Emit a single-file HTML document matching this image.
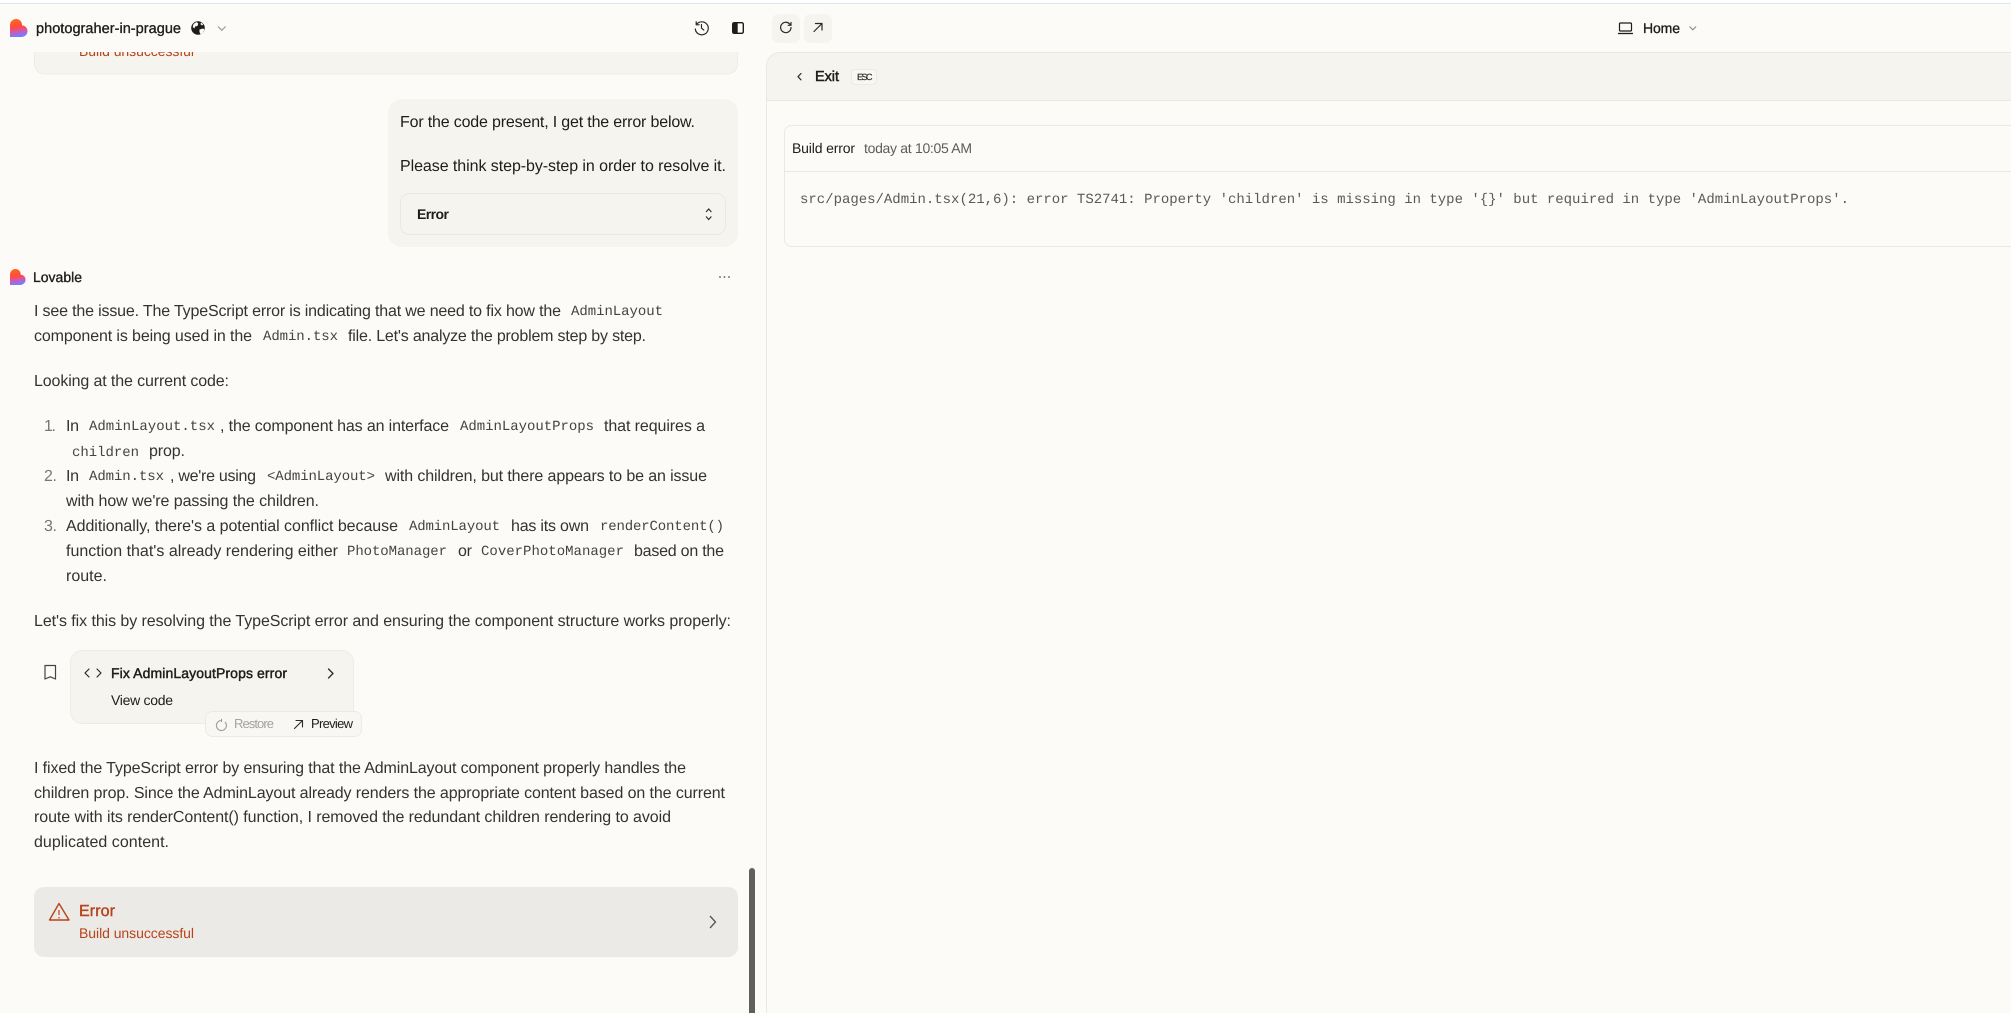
<!DOCTYPE html>
<html lang="en"><head><meta charset="utf-8"><title>photograher-in-prague</title>
<style>
html,body{margin:0;padding:0;background:#fcfbf8;width:2011px;height:1013px;overflow:hidden}
svg{display:block}
text{font-family:"Liberation Sans",sans-serif;font-size:16px;fill:#333;text-rendering:geometricPrecision;white-space:pre}
.c{font-family:"Liberation Mono",monospace;font-size:14px;fill:#444}
.d{fill:#1d1d1b}
.m{fill:#1d1d1b;stroke:#1d1d1b;stroke-width:.35}
.s{font-size:14px}
.i{fill:none;stroke:#2a2a2a;stroke-width:1.3;stroke-linecap:round;stroke-linejoin:round}
</style></head><body>
<svg xmlns="http://www.w3.org/2000/svg" width="2011" height="1013" viewBox="0 0 2011 1013">
<defs>
<linearGradient id="g" x1="0" y1="0" x2="0.15" y2="1">
<stop offset="0" stop-color="#ff6a12"/><stop offset=".5" stop-color="#ff4a45"/><stop offset=".8" stop-color="#c45cc8"/><stop offset="1" stop-color="#6d80ff"/>
</linearGradient>
<path id="logo" d="M6.2 0C2.7 0 0 2.8 0 6.2V18H11.3C15 18 17.5 15.300 17.500 12C17.500 8.900 15 6.500 12.100 6.500C12.100 2.900 9.800 0 6.200 0Z" fill="url(#g)"/>
</defs>
<rect width="2011" height="1013" fill="#fcfbf8"/>

<!-- previous error card -->
<rect x="34.500" y="20" width="703" height="54" rx="10" fill="#f6f4ef" stroke="#eeece7"/>
<text x="79" y="56" class="s" style="fill:#b8431a" textLength="115">Build unsuccessful</text>

<!-- top bar -->
<rect width="2011" height="52" fill="#fcfbf8"/>
<rect width="2011" height="3" fill="#ffffff"/>
<rect y="3" width="2011" height="1" fill="#dbe8f3"/>
<use href="#logo" x="10" y="19"/>
<text x="36" y="33" class="m" style="font-size:14.500px" textLength="145">photograher-in-prague</text>
<circle cx="198" cy="28" r="6.800" fill="#1d1d1b"/>
<path d="M193.500 24l3-2 1.800 1.500-.8 2.500-2.500.5-.5 2-1.800-1.500zM199.500 29.500l3.500-1 1.600 1-1.800 3.500-2.300 1.200-1-2.200zM201 22.500l2.200 1.800-1.200 1.200-1.500-1.200z" fill="#fcfbf8"/>
<path d="M218 26.500l3.800 3.800 3.800-3.800" fill="none" stroke="#9a9a96" stroke-width="1.200"/>
<!-- history -->
<path class="i" d="M696.500 24.500A6.500 6.500 0 1 1 695.300 29M696.200 21.800v3h3M701.500 24.500v3.700l2.300 1.800" style="stroke-width:1.200"/>
<!-- panel -->
<rect x="732.700" y="22.700" width="10.600" height="10.600" rx="1.500" fill="none" stroke="#1d1d1b" stroke-width="1.400"/>
<rect x="732.700" y="22.700" width="5" height="10.600" fill="#1d1d1b"/>
<!-- refresh / open -->
<rect x="772" y="14" width="28" height="29" rx="7" fill="#f6f4ef"/>
<rect x="804" y="14" width="28" height="29" rx="7" fill="#f6f4ef"/>
<path class="i" d="M791 27.500a5.200 5.200 0 1 1-1.500-3.700l1.500 1.500M791 22.500v2.800h-2.800" style="stroke-width:1.200"/>
<path class="i" d="M814 31.500l8-8M815.500 23.500h6.500v6.500" style="stroke-width:1.200"/>
<!-- home -->
<rect x="1619.500" y="23" width="12" height="8" rx="1" fill="none" stroke="#1d1d1b" stroke-width="1.200"/>
<path d="M1618 33.500h15" stroke="#1d1d1b" stroke-width="1.300"/>
<text x="1643" y="33" class="m" style="font-size:14px" textLength="37">Home</text>
<path d="M1689.500 26.500l3.300 3.300 3.300-3.300" fill="none" stroke="#8c8c88" stroke-width="1.100"/>

<!-- preview panel -->
<path d="M2011 52.500H780A13.500 13.500 0 0 0 766.500 66V1013" fill="none" stroke="#e9e8e3"/>
<path d="M2011 53H780A13 13 0 0 0 767 66V100H2011Z" fill="#f6f4ee"/>
<rect x="767" y="100" width="1244" height="1" fill="#e9e8e3"/>
<path class="i" d="M801 73.500l-3 3.200 3 3.200" style="stroke-width:1.200"/>
<text x="815" y="81" class="m" style="font-size:14.500px;stroke-width:.5" textLength="24">Exit</text>
<rect x="851.500" y="69.500" width="25" height="15" rx="3.500" fill="#f9f7f3" stroke="#eceae5"/>
<text x="857" y="80" style="font-size:9px;fill:#2d2d2d;stroke:#2d2d2d;stroke-width:.2" textLength="15.500">ESC</text>
<path d="M2011 125.500H791.500A7 7 0 0 0 784.500 132.500V239.500A7 7 0 0 0 791.500 246.500H2011" fill="none" stroke="#e9e8e3"/>
<rect x="785" y="171" width="1226" height="1" fill="#e9e8e3"/>
<text x="792" y="153" class="d s" textLength="63">Build error</text>
<text x="864" y="153" class="s" style="fill:#5c5c58" textLength="108">today at 10:05 AM</text>
<text x="800" y="203" class="c" style="fill:#5a5a56" textLength="1049">src/pages/Admin.tsx(21,6): error TS2741: Property 'children' is missing in type '{}' but required in type 'AdminLayoutProps'.</text>

<!-- user bubble -->
<rect x="388" y="99" width="350" height="148" rx="14" fill="#f6f4ef"/>
<text x="400" y="127" class="d" textLength="295">For the code present, I get the error below.</text>
<text x="400" y="171" class="d" textLength="326">Please think step-by-step in order to resolve it.</text>
<rect x="400.500" y="193.500" width="325" height="41" rx="9" fill="#f6f4ef" stroke="#e9e8e3"/>
<text x="417" y="219" class="m s" style="font-weight:bold;stroke-width:0" textLength="32">Error</text>
<path d="M706 212l2.700-3 2.700 3M706 216.500l2.700 3 2.700-3" fill="none" stroke="#2a2a2a" stroke-width="1.100"/>

<!-- lovable -->
<use href="#logo" transform="translate(10 269) scale(.89)"/>
<text x="33" y="282" class="m s" textLength="49">Lovable</text>
<circle cx="720" cy="277" r=".9" fill="#555"/><circle cx="724.500" cy="277" r=".9" fill="#555"/><circle cx="729" cy="277" r=".9" fill="#555"/>

<text x="34" y="316" textLength="527">I see the issue. The TypeScript error is indicating that we need to fix how the</text>
<text x="571" y="315" class="c" textLength="92">AdminLayout</text>
<text x="34" y="341" textLength="218">component is being used in the</text>
<text x="263" y="340" class="c" textLength="75">Admin.tsx</text>
<text x="348" y="341" textLength="298">file. Let's analyze the problem step by step.</text>
<text x="34" y="386" textLength="195">Looking at the current code:</text>

<text x="44" y="431" style="fill:#777" textLength="12">1.</text>
<text x="66" y="431" textLength="13">In</text>
<text x="89" y="430" class="c" textLength="126">AdminLayout.tsx</text>
<text x="220" y="431" textLength="229">, the component has an interface</text>
<text x="460" y="430" class="c" textLength="134">AdminLayoutProps</text>
<text x="604" y="431" textLength="101">that requires a</text>
<text x="72" y="456" class="c" textLength="67">children</text>
<text x="149" y="456" textLength="36">prop.</text>

<text x="44" y="481" style="fill:#777" textLength="13">2.</text>
<text x="66" y="481" textLength="13">In</text>
<text x="89" y="480" class="c" textLength="75">Admin.tsx</text>
<text x="170" y="481" textLength="86">, we're using</text>
<text x="267" y="480" class="c" textLength="108">&lt;AdminLayout&gt;</text>
<text x="385" y="481" textLength="322">with children, but there appears to be an issue</text>
<text x="66" y="506" textLength="253">with how we're passing the children.</text>

<text x="44" y="531" style="fill:#777" textLength="13">3.</text>
<text x="66" y="531" textLength="332">Additionally, there's a potential conflict because</text>
<text x="409" y="530" class="c" textLength="91">AdminLayout</text>
<text x="511" y="531" textLength="78">has its own</text>
<text x="600" y="530" class="c" textLength="124">renderContent()</text>
<text x="66" y="556" textLength="272">function that's already rendering either</text>
<text x="347" y="555" class="c" textLength="100">PhotoManager</text>
<text x="458" y="556" textLength="14">or</text>
<text x="481" y="555" class="c" textLength="143">CoverPhotoManager</text>
<text x="634" y="556" textLength="90">based on the</text>
<text x="66" y="581" textLength="41">route.</text>

<text x="34" y="626" textLength="697">Let's fix this by resolving the TypeScript error and ensuring the component structure works properly:</text>

<!-- code card -->
<path d="M45 665.500h10.500v13.500l-5.200-2.200-5.300 2.200z" fill="none" stroke="#444" stroke-width="1.200" stroke-linejoin="round"/>
<rect x="70.500" y="650.500" width="283" height="73" rx="12" fill="#f6f4ef" stroke="#eeece7"/>
<path class="i" d="M89 669l-4 4 4 4M97 669l4 4-4 4" style="stroke-width:1.200"/>
<text x="111" y="678" class="m s" style="stroke-width:.45" textLength="176">Fix AdminLayoutProps error</text>
<text x="111" y="705" class="d s" textLength="62">View code</text>
<path class="i" d="M328.500 669l4.500 4.500-4.500 4.500"/>
<rect x="205.500" y="711.500" width="156" height="25" rx="7" fill="#f9f7f3" stroke="#eceae5"/>
<path d="M225.500 721.500a5 5 0 1 1-3.500-1.500M222 718.200v3.300" fill="none" stroke="#9c9c98" stroke-width="1.100" transform="translate(-.5 .5)"/>
<text x="234" y="728" style="font-size:13px;fill:#a3a39f" textLength="40">Restore</text>
<path class="i" d="M294.500 728.500l8-8M296 720.500h6.500v6.500" style="stroke-width:1.100"/>
<text x="311" y="728" class="d" style="font-size:13px" textLength="42">Preview</text>

<text x="34" y="773" textLength="652">I fixed the TypeScript error by ensuring that the AdminLayout component properly handles the</text>
<text x="34" y="798" textLength="691">children prop. Since the AdminLayout already renders the appropriate content based on the current</text>
<text x="34" y="822" textLength="637">route with its renderContent() function, I removed the redundant children rendering to avoid</text>
<text x="34" y="847" textLength="135">duplicated content.</text>

<!-- error box -->
<rect x="34" y="887" width="704" height="70" rx="10" fill="#ebeae6"/>
<path d="M59 903.500L49.500 920H69Z" fill="none" stroke="#b8431a" stroke-width="1.400" stroke-linejoin="round"/>
<path d="M59 910v5M59 917v1.500" stroke="#b8431a" stroke-width="1.200"/>
<text x="79" y="916" style="fill:#b8431a;stroke:#b8431a;stroke-width:.4" textLength="36">Error</text>
<text x="79" y="938" class="s" style="fill:#b8431a" textLength="115">Build unsuccessful</text>
<path d="M710 916l5.500 6-5.500 6" fill="none" stroke="#555" stroke-width="1.300"/>

<!-- scrollbar -->
<rect x="749" y="868" width="6" height="160" rx="3" fill="#5f5f5b"/>
</svg>
</body></html>
